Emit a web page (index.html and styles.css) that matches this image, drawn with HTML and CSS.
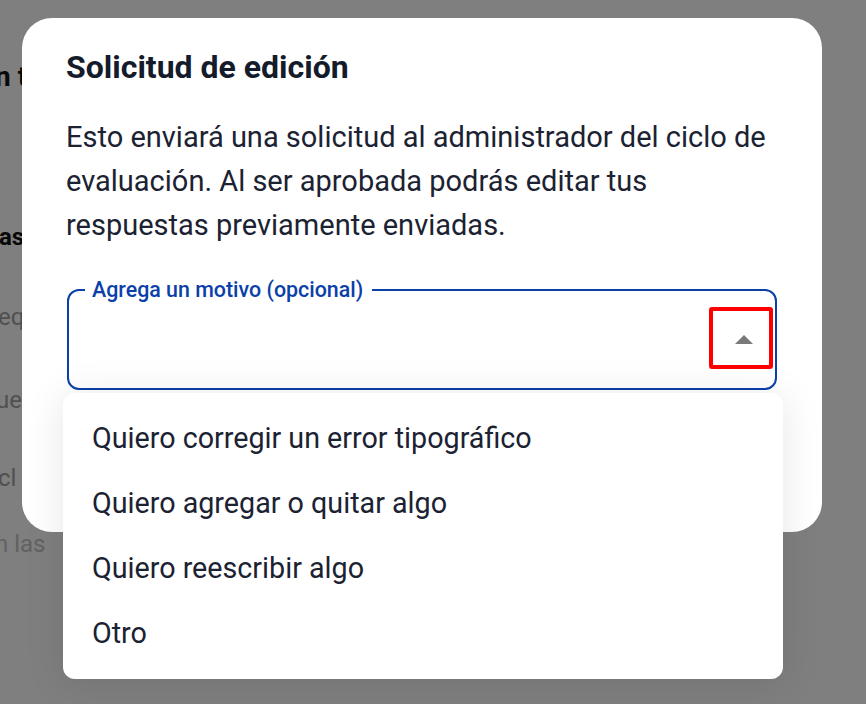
FILE: index.html
```html
<!DOCTYPE html>
<html lang="es">
<head>
<meta charset="utf-8">
<title>Solicitud de edición</title>
<link rel="stylesheet" href="styles.css">
</head>
<body>
<div class="page">
  <div class="bg-content">
    <h2 class="bg-h1">n tus respuestas</h2>
    <h3 class="bg-h2">as respuestas</h3>
    <p class="bg-p bg-1">equipo</p>
    <p class="bg-p bg-2">ue</p>
    <p class="bg-p bg-3">cl</p>
    <p class="bg-p bg-4">n las</p>
  </div>
  <div class="overlay"></div>

  <div class="modal" role="dialog" aria-labelledby="modal-title">
    <h1 id="modal-title" class="modal-title">Solicitud de edición</h1>
    <p class="modal-text">Esto enviará una solicitud al administrador del ciclo de evaluación. Al ser aprobada podrás editar tus respuestas previamente enviadas.</p>
    <fieldset class="field">
      <legend class="field-label">Agrega un motivo (opcional)</legend>
      <div class="field-row">
        <span class="field-value"></span>
        <span class="toggle">
          <svg class="caret" width="18" height="9" viewBox="0 0 18 9"><path d="M0 9 L9 0 L18 9 Z" fill="#7a7a7a"/></svg>
        </span>
      </div>
    </fieldset>
  </div>

  <ul class="menu" role="listbox">
    <li class="menu-item">Quiero corregir un error tipográfico</li>
    <li class="menu-item">Quiero agregar o quitar algo</li>
    <li class="menu-item">Quiero reescribir algo</li>
    <li class="menu-item">Otro</li>
  </ul>
</div>
</body>
</html>
```

FILE: styles.css
```css
* { box-sizing: border-box; }

html, body {
  margin: 0;
  padding: 0;
}

body {
  width: 866px;
  height: 704px;
  overflow: hidden;
  font-family: Roboto, "Noto Sans", sans-serif;
  background: #fff;
}

.page {
  position: relative;
  width: 866px;
  height: 704px;
  overflow: hidden;
}

/* background page (behind overlay) */
.bg-content {
  display: flex;
  flex-direction: column;
  padding-top: 60px;
  color: #111;
  white-space: nowrap;
}

.bg-h1 {
  margin: 0 0 0 -5px;
  font-size: 28px;
  font-weight: 700;
  line-height: 34px;
}

.bg-h2 {
  margin: 128px 0 0 -1px;
  font-size: 24px;
  font-weight: 700;
  line-height: 30px;
}

.bg-p {
  margin: 0;
  font-size: 24px;
  line-height: 30px;
  color: #a0a0a0;
}

.bg-1 { margin-top: 50px; margin-left: -2px; }
.bg-2 { margin-top: 53px; margin-left: -4px; }
.bg-3 { margin-top: 48px; margin-left: -2px; }
.bg-4 { margin-top: 36px; margin-left: -5px; color: #c4c4c4; }

.overlay {
  position: absolute;
  inset: 0;
  background: rgba(0, 0, 0, 0.5);
}

/* modal */
.modal {
  position: absolute;
  left: 22px;
  top: 18px;
  width: 800px;
  height: 514px;
  background: #fff;
  border-radius: 30px;
  padding: 30px 45px 0 44px;
  display: flex;
  flex-direction: column;
}

.modal-title {
  margin: 0;
  font-size: 32px;
  font-weight: 700;
  line-height: 38px;
  color: #141b2b;
}

.modal-text {
  margin: 29px 0 0;
  font-size: 29px;
  line-height: 44px;
  color: #1b2232;
}

.field {
  margin: 31px 0 0 1px;
  padding: 0 0 0 16px;
  border: 2.6px solid #0b3fa9;
  border-radius: 12px;
  height: 112px;
  min-width: 0;
}

.field-label {
  padding: 0 9px 0 7px;
  font-size: 21.4px;
  font-weight: 500;
  line-height: 24px;
  color: #0b3fa9;
}

.field-row {
  display: flex;
  align-items: center;
  justify-content: space-between;
  height: 72px;
  padding-right: 2px;
}

.toggle {
  width: 64px;
  height: 62px;
  border: 4px solid #ff0000;
  border-radius: 3px;
  display: flex;
  align-items: center;
  justify-content: center;
}

.caret { display: block; margin-left: 6px; margin-top: 2px; }

/* dropdown menu */
.menu {
  position: absolute;
  left: 63px;
  top: 393px;
  width: 720px;
  margin: 0;
  padding: 12px 0 14px;
  list-style: none;
  background: #fff;
  border-radius: 12px;
  box-shadow: 0 4px 40px rgba(0, 0, 0, 0.10);
}

.menu-item {
  height: 65px;
  display: flex;
  align-items: center;
  padding-left: 29px;
  font-size: 28.7px;
  color: #1b2232;
}
```
